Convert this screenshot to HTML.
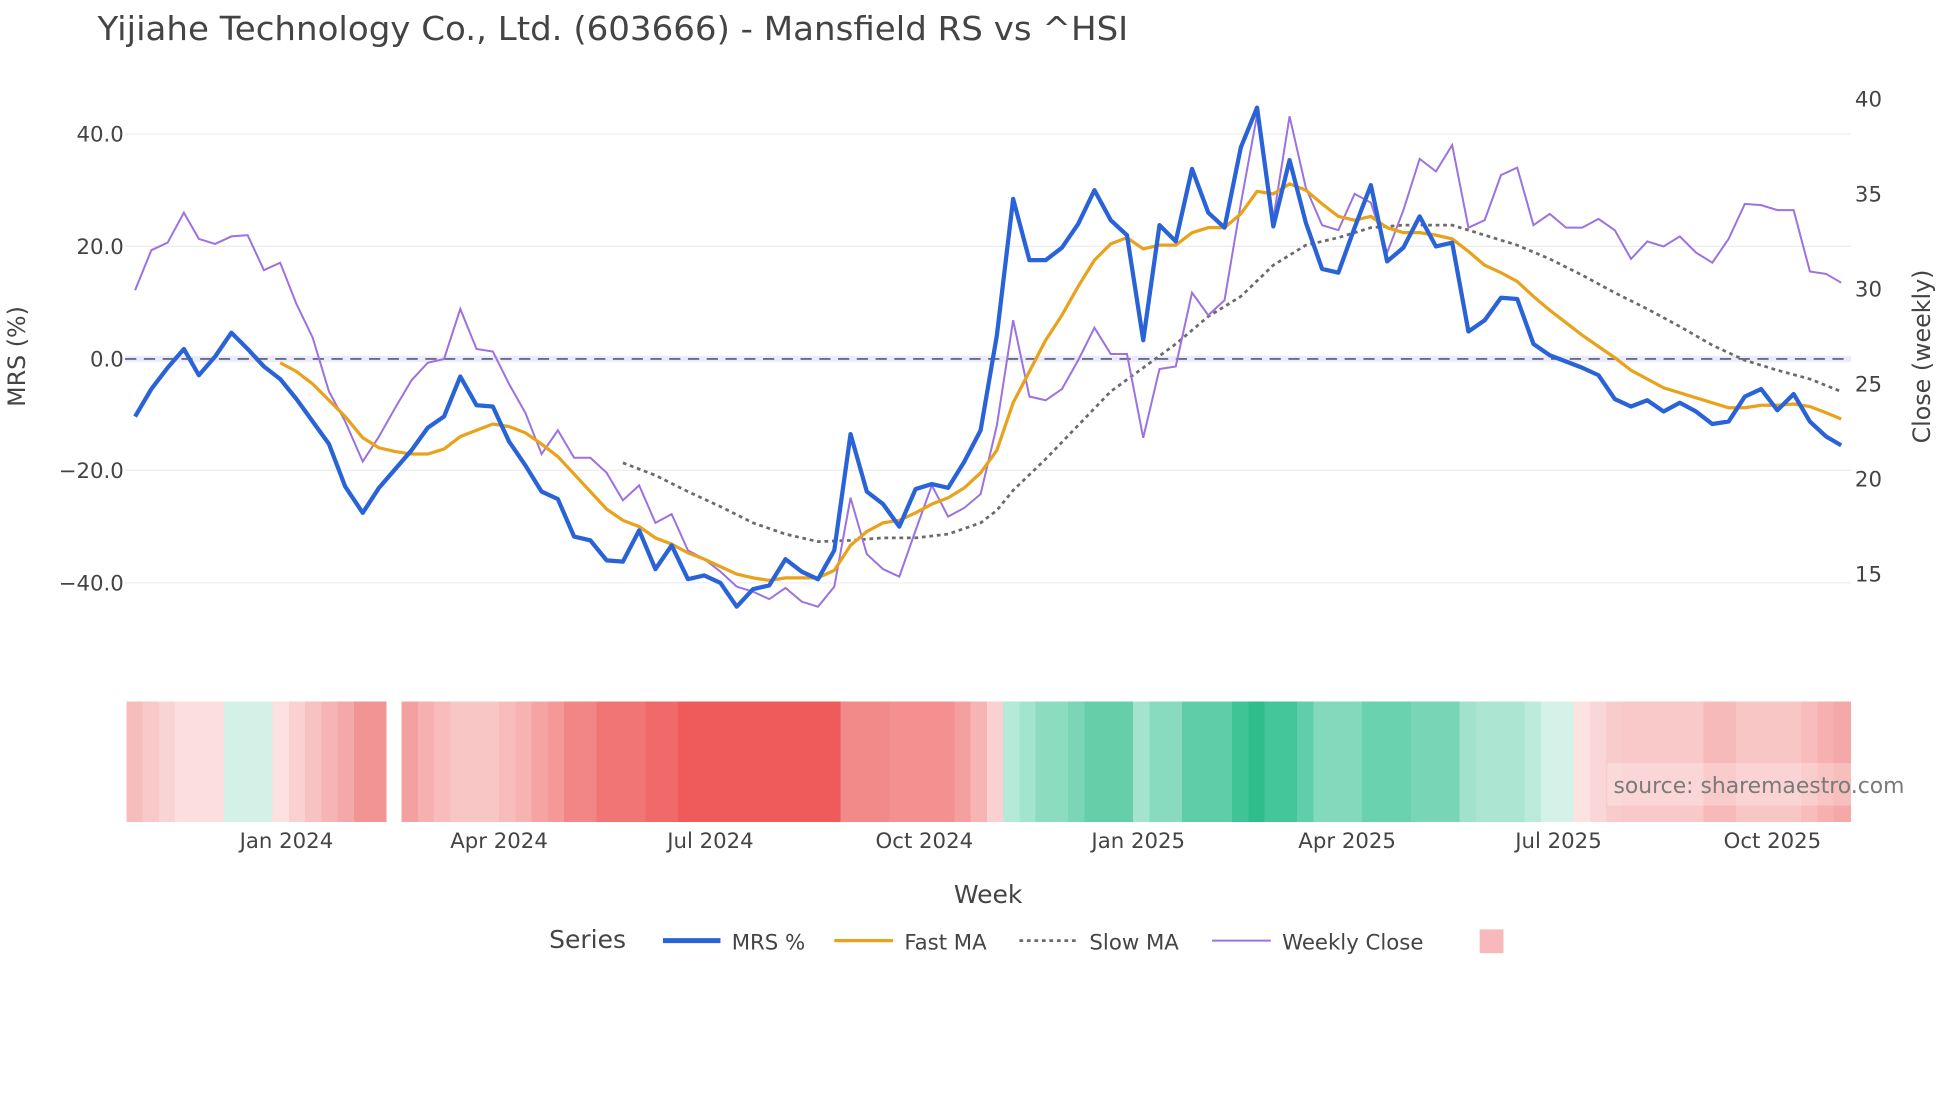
<!DOCTYPE html>
<html><head><meta charset="utf-8"><style>
html,body{margin:0;padding:0;background:#fff;}
svg{display:block;}
text{font-family:"DejaVu Sans","Liberation Sans",sans-serif;}
</style></head><body>
<svg width="1960" height="1102" viewBox="0 0 1567 881" preserveAspectRatio="none" xmlns="http://www.w3.org/2000/svg">
<rect width="1567" height="881" fill="#fff"/>
<text x="78" y="32" font-size="26" fill="#444" textLength="824" lengthAdjust="spacingAndGlyphs">Yijiahe Technology Co., Ltd. (603666) - Mansfield RS vs ^HSI</text>
<g stroke="#ecedf2" stroke-width="1">
<line x1="100" x2="1480" y1="107" y2="107"/><line x1="100" x2="1480" y1="197" y2="197"/>
<line x1="100" x2="1480" y1="376" y2="376"/><line x1="100" x2="1480" y1="466" y2="466"/>
</g>
<line x1="100" x2="1480" y1="287" y2="287" stroke="#ecebfb" stroke-width="5"/>
<line x1="100" x2="1480" y1="287" y2="287" stroke="#555a70" stroke-width="1.3" stroke-dasharray="9,6"/>
<g font-size="17" fill="#444" text-anchor="end">
<text x="99" y="113">40.0</text><text x="99" y="203">20.0</text><text x="99" y="293">0.0</text>
<text x="99" y="382">−20.0</text><text x="99" y="472">−40.0</text>
</g>
<g font-size="17" fill="#444">
<text x="1483" y="85">40</text><text x="1483" y="161">35</text><text x="1483" y="237">30</text>
<text x="1483" y="313">25</text><text x="1483" y="389">20</text><text x="1483" y="465">15</text>
</g>
<text transform="translate(20,285) rotate(-90)" font-size="19" fill="#444" text-anchor="middle">MRS (%)</text>
<text transform="translate(1543,285) rotate(-90)" font-size="19" fill="#444" text-anchor="middle">Close (weekly)</text>
<polyline fill="none" stroke="#6b6b6b" stroke-width="2.2" stroke-dasharray="3,3" points="498,370 524,380 550,393 576,405 602,418 628,427 654,433 680,432 706,430 732,430 758,427 784,418 797,408 810,392 836,367 862,340 888,313 914,294 940,275 966,253 992,237 1018,212 1044,196 1070,190 1096,182 1122,180 1148,180 1161,180 1187,188 1213,196 1239,207 1265,220 1291,234 1317,247 1343,261 1369,276 1395,288 1421,296 1447,303 1472,313"/>
<polyline fill="none" stroke="#9b72e0" stroke-width="1.6" points="108,232 121,200 134,194 147,170 159,191 172,195 185,189 198,188 211,216 224,210 237,243 250,270 263,313 276,337 290,369 303,349 316,326 329,304 342,290 355,287 368,247 381,279 394,281 407,307 420,330 433,363 446,344 459,366 472,366 485,378 498,400 511,388 524,418 537,411 550,440 563,447 576,457 589,469 602,473 615,479 628,470 641,481 654,485 667,469 680,398 693,443 706,455 719,461 732,424 745,388 758,413 771,406 784,395 797,340 810,256 823,317 836,320 849,311 862,288 875,262 888,283 901,283 914,350 927,295 940,293 953,234 966,252 979,240 992,163 1005,92 1018,175 1031,93 1044,150 1057,180 1070,184 1083,155 1096,162 1109,202 1122,168 1135,127 1148,137 1161,116 1174,182 1187,176 1200,140 1213,134 1226,180 1239,171 1252,182 1265,182 1278,175 1291,184 1304,207 1317,193 1330,197 1343,189 1356,202 1369,210 1382,191 1395,163 1408,164 1421,168 1434,168 1447,217 1460,219 1472,226"/>
<polyline fill="none" stroke="#e8a21c" stroke-width="2.6" points="224,290 237,297 250,307 263,320 276,333 290,350 303,358 316,361 329,363 342,363 355,359 368,349 381,344 394,339 407,341 420,346 433,355 446,365 459,379 472,393 485,407 498,416 511,421 524,430 537,435 550,442 563,447 576,453 589,459 602,462 615,464 628,462 641,462 654,462 667,456 680,436 693,425 706,418 719,416 732,410 745,403 758,398 771,390 784,378 797,360 810,322 823,297 836,272 849,252 862,229 875,208 888,195 901,190 914,199 927,196 940,196 953,186 966,182 979,182 992,171 1005,153 1018,155 1031,147 1044,152 1057,163 1070,173 1083,176 1096,173 1109,182 1122,186 1135,186 1148,188 1161,191 1174,201 1187,212 1200,218 1213,225 1226,237 1239,248 1252,258 1265,268 1278,277 1291,286 1304,296 1317,303 1330,310 1343,314 1356,318 1369,322 1382,326 1395,326 1408,324 1421,324 1434,323 1447,325 1460,330 1472,335"/>
<polyline fill="none" stroke="#2a63d8" stroke-width="3.4" stroke-linejoin="round" points="108,333 121,311 134,294 147,279 159,300 172,285 185,266 198,279 211,293 224,303 237,319 250,337 263,355 276,389 290,410 303,390 316,375 329,360 342,342 355,333 368,301 381,324 394,325 407,353 420,372 433,393 446,399 459,429 472,432 485,448 498,449 511,424 524,455 537,436 550,463 563,460 576,466 589,485 602,471 615,468 628,447 641,457 654,463 667,440 680,347 693,393 706,403 719,421 732,391 745,387 758,390 771,369 784,344 797,268 810,159 823,208 836,208 849,198 862,179 875,152 888,176 901,188 914,272 927,180 940,193 953,135 966,170 979,182 992,118 1005,86 1018,181 1031,128 1044,178 1057,215 1070,218 1083,182 1096,148 1109,209 1122,198 1135,173 1148,197 1161,194 1174,265 1187,256 1200,238 1213,239 1226,275 1239,284 1252,289 1265,294 1278,300 1291,319 1304,325 1317,320 1330,329 1343,322 1356,329 1369,339 1382,337 1395,317 1408,311 1421,328 1434,315 1447,337 1460,349 1472,356"/>
<g shape-rendering="crispEdges">
<rect x="101" y="561" width="13" height="96" fill="#f7bcbc"/>
<rect x="114" y="561" width="13" height="96" fill="#f9c8c8"/>
<rect x="127" y="561" width="13" height="96" fill="#fad4d4"/>
<rect x="140" y="561" width="39" height="96" fill="#fcdede"/>
<rect x="179" y="561" width="39" height="96" fill="#d3f1e6"/>
<rect x="218" y="561" width="13" height="96" fill="#fde0e0"/>
<rect x="231" y="561" width="13" height="96" fill="#fbd0d0"/>
<rect x="244" y="561" width="13" height="96" fill="#f9c2c2"/>
<rect x="257" y="561" width="13" height="96" fill="#f7b4b4"/>
<rect x="270" y="561" width="13" height="96" fill="#f5a8a8"/>
<rect x="283" y="561" width="26" height="96" fill="#f39494"/>
<rect x="321" y="561" width="13" height="96" fill="#f5a0a0"/>
<rect x="334" y="561" width="13" height="96" fill="#f7b0b0"/>
<rect x="347" y="561" width="13" height="96" fill="#f8bcbc"/>
<rect x="360" y="561" width="39" height="96" fill="#f9c6c6"/>
<rect x="399" y="561" width="13" height="96" fill="#f8bcbc"/>
<rect x="412" y="561" width="13" height="96" fill="#f7b2b2"/>
<rect x="425" y="561" width="13" height="96" fill="#f5a3a3"/>
<rect x="438" y="561" width="13" height="96" fill="#f49898"/>
<rect x="451" y="561" width="26" height="96" fill="#f28585"/>
<rect x="477" y="561" width="39" height="96" fill="#f17575"/>
<rect x="516" y="561" width="26" height="96" fill="#f06a6a"/>
<rect x="542" y="561" width="130" height="96" fill="#ef5a5a"/>
<rect x="672" y="561" width="39" height="96" fill="#f38a8a"/>
<rect x="711" y="561" width="52" height="96" fill="#f49090"/>
<rect x="763" y="561" width="13" height="96" fill="#f5a0a0"/>
<rect x="776" y="561" width="13" height="96" fill="#f7b4b4"/>
<rect x="789" y="561" width="13" height="96" fill="#fad0d0"/>
<rect x="802" y="561" width="13" height="96" fill="#b4ead8"/>
<rect x="815" y="561" width="13" height="96" fill="#a2e4cd"/>
<rect x="828" y="561" width="26" height="96" fill="#8cdcc0"/>
<rect x="854" y="561" width="13" height="96" fill="#7ad6b6"/>
<rect x="867" y="561" width="39" height="96" fill="#66cfaa"/>
<rect x="906" y="561" width="13" height="96" fill="#a4e4ce"/>
<rect x="919" y="561" width="26" height="96" fill="#88dbbf"/>
<rect x="945" y="561" width="40" height="96" fill="#5fcea8"/>
<rect x="985" y="561" width="13" height="96" fill="#3fc496"/>
<rect x="998" y="561" width="13" height="96" fill="#2dbe8c"/>
<rect x="1011" y="561" width="26" height="96" fill="#45c69a"/>
<rect x="1037" y="561" width="13" height="96" fill="#60ceaa"/>
<rect x="1050" y="561" width="39" height="96" fill="#82d9bb"/>
<rect x="1089" y="561" width="39" height="96" fill="#6ad2ae"/>
<rect x="1128" y="561" width="39" height="96" fill="#78d6b6"/>
<rect x="1167" y="561" width="13" height="96" fill="#a0e2cb"/>
<rect x="1180" y="561" width="39" height="96" fill="#ace6d2"/>
<rect x="1219" y="561" width="13" height="96" fill="#bcebdb"/>
<rect x="1232" y="561" width="26" height="96" fill="#d4f2e7"/>
<rect x="1258" y="561" width="13" height="96" fill="#fde2e2"/>
<rect x="1271" y="561" width="13" height="96" fill="#fad6d6"/>
<rect x="1284" y="561" width="13" height="96" fill="#f9cccc"/>
<rect x="1297" y="561" width="65" height="96" fill="#f9c8c8"/>
<rect x="1362" y="561" width="26" height="96" fill="#f7baba"/>
<rect x="1388" y="561" width="52" height="96" fill="#f9c6c6"/>
<rect x="1440" y="561" width="13" height="96" fill="#f8bcbc"/>
<rect x="1453" y="561" width="13" height="96" fill="#f6b0b0"/>
<rect x="1466" y="561" width="14" height="96" fill="#f5a8a8"/>
</g>
<rect x="1285" y="610" width="195" height="34" fill="#ffffff" fill-opacity="0.25"/>
<text x="1290" y="634" font-size="17.5" fill="#7a7a7a">source: sharemaestro.com</text>
<g font-size="17" fill="#444" text-anchor="middle">
<text x="229" y="678">Jan 2024</text><text x="399" y="678">Apr 2024</text><text x="568" y="678">Jul 2024</text>
<text x="739" y="678">Oct 2024</text><text x="910" y="678">Jan 2025</text><text x="1077" y="678">Apr 2025</text>
<text x="1246" y="678">Jul 2025</text><text x="1417" y="678">Oct 2025</text>
</g>
<text x="790" y="722" font-size="20" fill="#444" text-anchor="middle">Week</text>
<text x="439" y="758" font-size="20" fill="#444">Series</text>
<line x1="530" x2="576" y1="752" y2="752" stroke="#2a63d8" stroke-width="4"/>
<text x="585" y="759" font-size="17" fill="#444">MRS %</text>
<line x1="667" x2="714" y1="752" y2="752" stroke="#e8a21c" stroke-width="2.6"/>
<text x="723" y="759" font-size="17" fill="#444">Fast MA</text>
<line x1="815" x2="861" y1="752" y2="752" stroke="#6b6b6b" stroke-width="2.2" stroke-dasharray="3,3"/>
<text x="871" y="759" font-size="17" fill="#444">Slow MA</text>
<line x1="969" x2="1016" y1="752" y2="752" stroke="#9b72e0" stroke-width="1.6"/>
<text x="1025" y="759" font-size="17" fill="#444">Weekly Close</text>
<rect x="1183" y="743" width="19" height="19" fill="#f7b9b9"/>
</svg>
</body></html>
